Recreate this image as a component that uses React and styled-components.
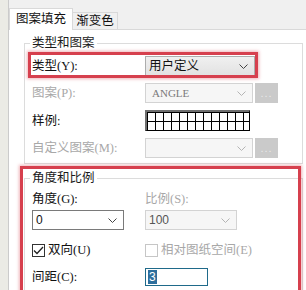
import React from "react"
import styled, { createGlobalStyle, css } from "styled-components"

const Global = createGlobalStyle`
  html, body {
    margin: 0;
    padding: 0;
  }
  body {
    width: 306px;
    height: 290px;
    overflow: hidden;
    background: #f0f0f0;
    font-family: "Liberation Serif", "Noto Sans CJK SC", serif;
    font-size: 12.5px;
    color: #111;
  }
`

const Page = styled.div`
  display: flex;
  width: 306px;
  height: 290px;
  overflow: hidden;
`

const SideStrip = styled.div`
  flex: none;
  width: 8px;
  background: #ebebe5;
  border-right: 1px solid #cbcbcb;
`

const Main = styled.div`
  flex: 1;
  display: flex;
  flex-direction: column;
  min-width: 0;
`

const TabBar = styled.div`
  flex: none;
  height: 29px;
  display: flex;
  align-items: flex-end;
  background: #f0f0f0;
  border-bottom: 1px solid #d9d9d9;
  position: relative;
  z-index: 1;
`

const Tab = styled.div`
  display: flex;
  align-items: center;
  justify-content: center;
  box-sizing: border-box;
  border: 1px solid #d9d9d9;
  border-bottom: none;
  line-height: 16px;
  ${props => props.$active ? css`
    width: 64px;
    height: 22px;
    margin-bottom: -1px;
    background: #fff;
    padding-bottom: 1px;
  ` : css`
    width: 46px;
    height: 17px;
    margin-left: -1px;
    background: #f0f0f0;
  `}
`

const Panel = styled.div`
  flex: none;
  background: #fff;
  padding: 13px 3px 0 15px;
`

const GroupBox = styled.div`
  position: relative;
  border: 1px solid #dcdcdc;
  padding: ${props => props.$pad};
  margin-top: ${props => props.$top || 0}px;
  ${props => props.$marked && css`
    &::after {
      content: "";
      position: absolute;
      top: -13px;
      left: -5px;
      right: 1px;
      bottom: -30px;
      border: 3px solid #d6404e;
      box-shadow: 0 0 3px 1px rgba(214, 64, 78, 0.4);
      pointer-events: none;
    }
  `}
`

const Legend = styled.span`
  position: absolute;
  top: -9px;
  left: 5px;
  padding: 0 2px;
  background: #fff;
  line-height: 16px;
  color: #1a1a1a;
`

const Rows = styled.div`
  display: flex;
  flex-direction: column;
  gap: 7px;
`

const Row = styled.div`
  position: relative;
  display: flex;
  align-items: center;
  width: max-content;
  height: ${props => props.$h || 20}px;
  ${props => props.$marked && css`
    &::after {
      content: "";
      position: absolute;
      top: -4px;
      bottom: -2px;
      left: -4px;
      right: -3px;
      border: 3px solid #d6404e;
      box-shadow: 0 0 3px 1px rgba(214, 64, 78, 0.4);
      pointer-events: none;
    }
  `}
`

const Label = styled.span`
  width: ${props => props.$w || 113}px;
  flex: none;
  line-height: 16px;
  white-space: nowrap;
  color: ${props => props.$disabled ? "#a8a8a8" : "#111"};
`

const SelectBox = styled.div`
  box-sizing: border-box;
  display: flex;
  align-items: center;
  justify-content: space-between;
  width: ${props => props.$w}px;
  height: ${props => props.$h || 20}px;
  padding: 0 6px 0 3px;
  border: 1px solid ${props => props.$variant === "combo" ? "#adadad" : props.$variant === "disabled" ? "#d3d3d3" : "#7a7a7a"};
  background: ${props => props.$variant === "combo" ? "linear-gradient(#f0f0f0, #e2e2e2)" : props.$variant === "disabled" ? "#f6f6f6" : "#fff"};
  color: ${props => props.$variant === "disabled" ? "#7a7a7a" : "#111"};
  font-family: ${props => props.$font || "inherit"};
  font-size: ${props => props.$size || 12.5}px;
  line-height: 16px;
`

const Chevron = ({ light }) => (
  <svg width="9" height="5" viewBox="0 0 9 5">
    <path d="M0.5 0.5 L4.5 4.5 L8.5 0.5" fill="none" stroke={light ? "#b4b4b4" : "#444"} strokeWidth="1" />
  </svg>
)

const DotsButton = styled.div`
  box-sizing: border-box;
  width: 23px;
  height: 20px;
  margin-left: 2px;
  background: #cacaca;
  color: #e9e9e9;
  font-family: "Liberation Sans", sans-serif;
  font-size: 11px;
  display: flex;
  align-items: center;
  justify-content: center;
  letter-spacing: 1px;
`

const Swatch = styled.div`
  box-sizing: border-box;
  width: 105px;
  height: 21px;
  border-top: 2px solid #6e6e6e;
  border-left: 2px solid #6e6e6e;
  border-right: 1px solid #000;
  border-bottom: 1px solid #000;
  background-color: #fff;
  background-image:
    linear-gradient(to right, #000 1px, transparent 1px),
    linear-gradient(to bottom, #000 1px, transparent 1px);
  background-size: 8px 9px;
`

const FieldRow = styled.div`
  display: grid;
  grid-template-columns: 113px auto;
  align-items: center;
  margin-top: ${props => props.$top || 0}px;
  height: ${props => props.$h}px;
`

const CheckItem = styled.label`
  display: flex;
  align-items: center;
  gap: 3px;
  line-height: 16px;
  color: ${props => props.$disabled ? "#a8a8a8" : "#111"};
`

const Box = styled.span`
  box-sizing: border-box;
  width: 13px;
  height: 13px;
  border: 1px solid ${props => props.$disabled ? "#c6c6c6" : "#333"};
  background: #fff;
  display: flex;
  align-items: center;
  justify-content: center;
`

const Check = ({ checked, disabled, children }) => (
  <CheckItem $disabled={disabled}>
    <Box $disabled={disabled}>
      {checked && (
        <svg width="11" height="9" viewBox="0 0 11 9">
          <path d="M1 4.5 L4 7.5 L10 1" fill="none" stroke="#222" strokeWidth="1.3" />
        </svg>
      )}
    </Box>
    {children}
  </CheckItem>
)

const TextInput = styled.div`
  box-sizing: border-box;
  width: 63px;
  height: 18px;
  border: 1px solid #1f6a8a;
  background: #fff;
  padding-left: 2px;
  display: flex;
  align-items: center;
  font-family: "Liberation Sans", sans-serif;
  font-size: 12px;
`

const Selected = styled.span`
  background: #2d6e9c;
  color: #fff;
  line-height: 14px;
  padding: 0 1px;
`

export default function App() {
  return (
    <>
      <Global />
      <Page>
        <SideStrip />
        <Main>
          <TabBar>
            <Tab $active>图案填充</Tab>
            <Tab>渐变色</Tab>
          </TabBar>
          <Panel>
            <GroupBox $pad="12px 0 5px 7px">
              <Legend>类型和图案</Legend>
              <Rows>
                <Row $marked>
                  <Label>类型(Y):</Label>
                  <SelectBox $w={110} $variant="combo">
                    用户定义
                    <Chevron />
                  </SelectBox>
                </Row>
                <Row>
                  <Label $disabled>图案(P):</Label>
                  <SelectBox $w={108} $variant="disabled" $font={'"Liberation Serif", serif'} $size={11}>
                    <span style={{ paddingLeft: 3 }}>ANGLE</span>
                    <Chevron light />
                  </SelectBox>
                  <DotsButton>...</DotsButton>
                </Row>
                <Row $h={21}>
                  <Label>样例:</Label>
                  <Swatch />
                </Row>
                <Row>
                  <Label $disabled>自定义图案(M):</Label>
                  <SelectBox $w={108} $variant="disabled">
                    <span />
                    <Chevron light />
                  </SelectBox>
                  <DotsButton>...</DotsButton>
                </Row>
              </Rows>
            </GroupBox>

            <GroupBox $top={14} $pad="12px 0 20px 7px" $marked>
              <Legend>角度和比例</Legend>
              <FieldRow $h={16}>
                <Label>角度(G):</Label>
                <Label $disabled>比例(S):</Label>
              </FieldRow>
              <FieldRow $top={3} $h={20}>
                <SelectBox $w={92} $font={'"Liberation Sans", sans-serif'} $size={12}>
                  0
                  <Chevron />
                </SelectBox>
                <SelectBox $w={92} $variant="disabled" $font={'"Liberation Sans", sans-serif'} $size={12}>
                  <span style={{ color: "#555" }}>100</span>
                  <Chevron light />
                </SelectBox>
              </FieldRow>
              <FieldRow $top={12} $h={14}>
                <Check checked>双向(U)</Check>
                <Check disabled>相对图纸空间(E)</Check>
              </FieldRow>
              <FieldRow $top={12} $h={18}>
                <Label>间距(C):</Label>
                <TextInput>
                  <Selected>3</Selected>
                </TextInput>
              </FieldRow>
            </GroupBox>
          </Panel>
        </Main>
      </Page>
    </>
  )
}
